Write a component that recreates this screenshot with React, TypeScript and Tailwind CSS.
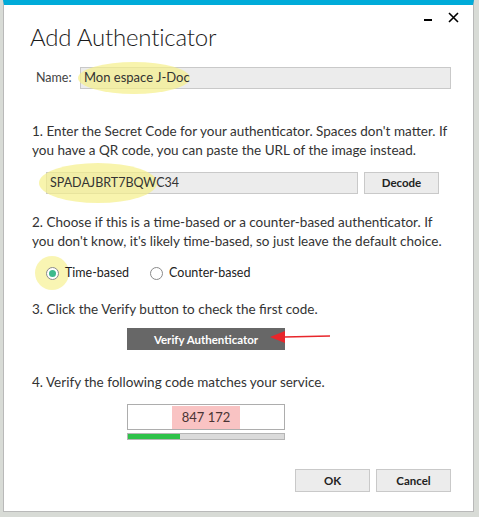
import React from 'react';

const font = { fontFamily: 'Lato, "Noto Sans", sans-serif' };

const Radio: React.FC<{ checked?: boolean; label: string }> = ({ checked, label }) => (
  <label className="relative flex items-center gap-[6px] text-[12.5px] text-[#222]">
    {checked && (
      <span className="absolute -left-[11px] top-1/2 -translate-y-1/2 w-[34px] h-[34px] rounded-full bg-[#f7f3a0]/80" />
    )}
    <span className="relative w-[13px] h-[13px] rounded-full border border-[#8a8a8a] bg-white flex items-center justify-center">
      {checked && <span className="w-[7px] h-[7px] rounded-full bg-[#3dba8c]" />}
    </span>
    <span className="relative">{label}</span>
  </label>
);

const App: React.FC = () => {
  return (
    <div className="w-[479px] h-[517px] bg-[#d8dbd6] flex overflow-hidden" style={font}>
      <div className="ml-[3px] w-[471px] h-[512px] bg-white border-t-[5px] border-t-[#00abd9] border-l border-r border-b border-[#b9b9b9] relative flex flex-col text-[#333]">
        {/* window controls */}
        <div className="absolute right-[14px] top-[7px] flex items-center gap-[16px] text-black">
          <span className="w-[8px] h-[2px] bg-black mt-[5px]" />
          <svg width="11" height="11" viewBox="0 0 11 11">
            <path d="M1 1 L10 10 M10 1 L1 10" stroke="#000" strokeWidth="1.6" />
          </svg>
        </div>

        <h1 className="pl-[26px] pt-[17px] text-[24px] tracking-[-0.2px] font-light text-[#1a1a1a] leading-[30px]">Add Authenticator</h1>

        {/* name */}
        <div className="flex items-center mt-[15px] pl-[32px] pr-[22px]">
          <span className="text-[12.5px] w-[44px] text-[#444]">Name:</span>
          <div className="relative flex-1 h-[22px] bg-[#ececec] border border-[#c9c9c9] flex items-center px-[3px] text-[13px] text-[#333]">
            <span className="absolute -left-[3px] -top-[6px] w-[112px] h-[32px] rounded-[50%] bg-[#f5ef8a]/70" />
            <span className="relative">Mon espace J-Doc</span>
          </div>
        </div>

        {/* step 1 */}
        <p className="mt-[33px] pl-[28px] text-[13.5px] leading-[19px] whitespace-nowrap">
          1. Enter the Secret Code for your authenticator. Spaces don't matter. If
          <br />
          you have a QR code, you can paste the URL of the image instead.
        </p>
        <div className="flex items-center mt-[12px] pl-[42px] gap-[6px]">
          <div className="relative w-[312px] h-[22px] bg-[#ececec] border border-[#c9c9c9] flex items-center px-[3px] text-[12.5px] text-[#333]">
            <span className="absolute -left-[8px] -top-[10px] w-[118px] h-[40px] rounded-[50%] bg-[#f5ef8a]/70" />
            <span className="relative">SPADAJBRT7BQWC34</span>
          </div>
          <button className="w-[75px] h-[22px] bg-[#ececec] border border-[#c9c9c9] text-[11.5px] font-bold text-[#222]">Decode</button>
        </div>

        {/* step 2 */}
        <p className="mt-[19px] pl-[28px] text-[13.5px] leading-[19px] whitespace-nowrap">
          2. Choose if this is a time-based or a counter-based authenticator. If
          <br />
          you don't know, it's likely time-based, so just leave the default choice.
        </p>
        <div className="flex items-center mt-[13px] pl-[42px] gap-[21px]">
          <Radio checked label="Time-based" />
          <Radio label="Counter-based" />
        </div>

        {/* step 3 */}
        <p className="mt-[17px] pl-[28px] text-[13.5px] leading-[19px]">3. Click the Verify button to check the first code.</p>
        <div className="relative mt-[7px] pl-[123px]">
          <button className="w-[158px] h-[22px] bg-[#676767] text-white text-[11.5px] font-bold">Verify Authenticator</button>
          <svg className="absolute left-[264px] top-[3px]" width="64" height="16" viewBox="0 0 64 16">
            <path d="M16 8 L62 7" stroke="#e8262b" strokeWidth="1.5" />
            <path d="M2 8 L17 2 L17 14 Z" fill="#e8262b" />
          </svg>
        </div>

        {/* step 4 */}
        <p className="mt-[23px] pl-[28px] text-[13.5px] leading-[19px]">4. Verify the following code matches your service.</p>
        <div className="mt-[12px] pl-[123px] flex flex-col">
          <div className="w-[158px] h-[26px] border border-[#adadad] bg-white flex items-center justify-center">
            <span className="bg-[#f9c3c3] h-[23px] w-[68px] flex items-center justify-center text-[13px] text-[#4a3434]">847 172</span>
          </div>
          <div className="mt-[3px] w-[158px] h-[7px] border border-[#b5b5b5] bg-[#dadada] flex">
            <div className="w-[52px] h-full bg-[#2fc24a]" />
          </div>
        </div>

        {/* actions */}
        <div className="mt-auto mb-[19px] pr-[22px] flex justify-end gap-[6px]">
          <button className="w-[75px] h-[23px] bg-[#ececec] border border-[#c9c9c9] text-[11.5px] font-bold text-[#222]">OK</button>
          <button className="w-[75px] h-[23px] bg-[#ececec] border border-[#c9c9c9] text-[11.5px] font-bold text-[#222]">Cancel</button>
        </div>
      </div>
    </div>
  );
};

export default App;
